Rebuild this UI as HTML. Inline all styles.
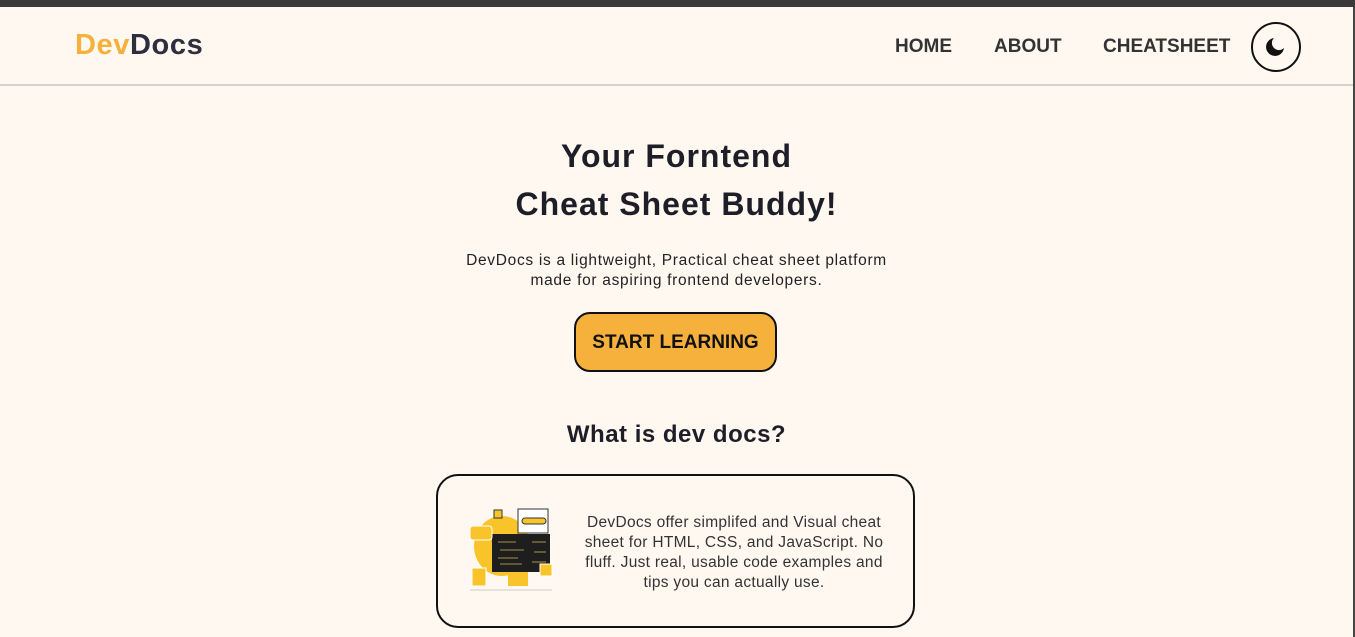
<!DOCTYPE html>
<html><head><meta charset="utf-8"><style>
*{margin:0;padding:0;box-sizing:border-box}
body{width:1355px;height:637px;overflow:hidden;background:#fff8f1;font-family:"Liberation Sans",sans-serif;position:relative}
.top{position:absolute;left:0;top:0;width:1355px;height:7px;background:#3a3a3a}
.edge{position:absolute;right:0;top:7px;width:2px;height:630px;background:#444}
header{position:absolute;top:7px;left:0;width:1353px;height:79px;border-bottom:2px solid #d4d2d0}
.logo{position:absolute;left:75px;top:22px;font-size:29px;font-weight:bold;letter-spacing:0.6px;color:#2d2e3e}
.logo span{color:#f5b13c}
nav a{position:absolute;top:29px;font-size:19px;font-weight:bold;color:#333;text-decoration:none}
.theme{position:absolute;left:1251px;top:15px;width:50px;height:50px;border:2px solid #111;border-radius:50%}
h1{position:absolute;left:0;width:1353px;text-align:center;font-size:32px;font-weight:bold;color:#1e1e28;line-height:48px;top:132px;letter-spacing:1px}
.p{position:absolute;left:0;width:1353px;text-align:center;top:251px;font-size:15.5px;line-height:20px;color:#222;letter-spacing:0.7px}
.btn{position:absolute;left:574px;top:312px;width:203px;height:60px;background:#f5b13c;border:2px solid #111;border-radius:16px;font-size:19px;font-weight:bold;color:#111;text-align:center;line-height:58px}
h2{position:absolute;left:0;width:1353px;text-align:center;top:421px;font-size:24px;font-weight:bold;color:#1e1e28;letter-spacing:0.5px}
.card{position:absolute;left:436px;top:474px;width:479px;height:154px;border:2px solid #111;border-radius:22px}
.ct{position:absolute;left:136px;top:37px;width:320px;text-align:center;font-size:15.5px;line-height:20px;color:#333;letter-spacing:0.3px}
</style></head><body>
<div class="top"></div><div class="edge"></div>
<header>
<div class="logo"><span>Dev</span>Docs</div>
<nav><a style="left:895px">HOME</a><a style="left:994px">ABOUT</a><a style="left:1103px">CHEATSHEET</a></nav>
<div class="theme"><svg width="46" height="46" viewBox="0 0 46 46" style="position:absolute;left:0;top:0"><path d="M21 14a9 9 0 1 0 10 10a6 6 0 1 1 -10 -10z" fill="#111"/></svg></div>
</header>
<h1>Your Forntend<br>Cheat Sheet Buddy!</h1>
<div class="p">DevDocs is a lightweight, Practical cheat sheet platform<br>made for aspiring frontend developers.</div>
<div class="btn">START LEARNING</div>
<h2>What is dev docs?</h2>
<div class="card">
<svg width="90" height="90" viewBox="0 0 90 90" style="position:absolute;left:30px;top:30px">
<ellipse cx="34" cy="40" rx="28" ry="30" fill="#f9c42a"/>
<circle cx="70" cy="12" r="8" fill="#f9c42a"/>
<rect x="24" y="28" width="58" height="38" fill="#1e1e1e"/>
<rect x="50" y="3" width="30" height="24" fill="#fff" stroke="#333"/>
<rect x="54" y="12" width="24" height="6" rx="3" fill="#f9c42a" stroke="#333"/>
<rect x="2" y="20" width="22" height="14" rx="3" fill="#f9c42a" stroke="#fff"/>
<rect x="26" y="4" width="8" height="8" fill="#f9c42a" stroke="#333"/>
<rect x="40" y="66" width="20" height="14" fill="#f9c42a"/>
<rect x="4" y="62" width="14" height="18" fill="#f9c42a" stroke="#fff"/>
<rect x="72" y="58" width="12" height="12" fill="#f9c42a" stroke="#fff"/>
<g stroke="#8a7a40" stroke-width="1.3"><line x1="30" y1="36" x2="48" y2="36"/><line x1="32" y1="44" x2="56" y2="44"/><line x1="30" y1="52" x2="50" y2="52"/><line x1="32" y1="58" x2="54" y2="58"/><line x1="64" y1="36" x2="78" y2="36"/><line x1="66" y1="46" x2="78" y2="46"/><line x1="64" y1="56" x2="78" y2="56"/></g>
<line x1="2" y1="84" x2="84" y2="84" stroke="#ccc"/>
</svg>
<div class="ct">DevDocs offer simplifed and Visual cheat sheet for HTML, CSS, and JavaScript. No fluff. Just real, usable code examples and tips you can actually use.</div>
</div>
</body></html>
